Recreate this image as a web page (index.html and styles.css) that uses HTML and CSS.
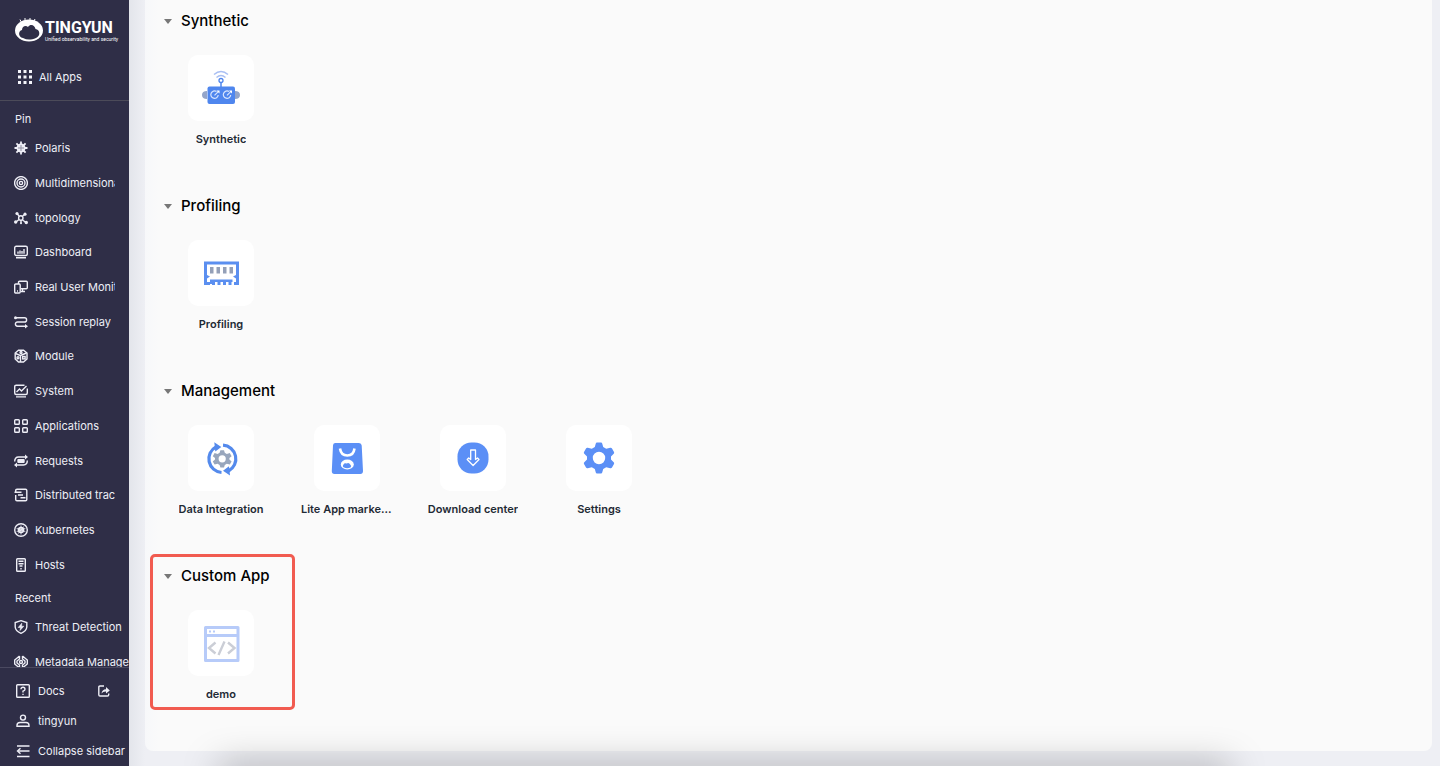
FILE: index.html
```html
<!DOCTYPE html>
<html lang="en">
<head>
  <meta charset="UTF-8" />
  <meta name="viewport" content="width=device-width, initial-scale=1.0"/>
  <title>Tingyun - All Apps</title>
  <link rel="stylesheet" href="styles.css">
</head>
<body>
  <aside class="sidebar">
    <div class="sidebar-top">
      <a class="logo" href="#">
        <svg width="28" height="24" viewBox="0 0 28 24">
          <ellipse cx="14" cy="12.500" rx="14" ry="11" fill="#fff"/>
          <path d="M5 1.500l1 2M10 0l0 2M15 0v2M20 1l-1 2" stroke="#fff" stroke-width="1"/>
          <path d="M8 20C3 19 3 13 7 12C7 8 11 7 13 9C16 5 20 8 20.500 11C25 11.500 26 18 21 20C16 22 12 22 8 20Z" fill="#2f2e47"/>
        </svg>
        <span class="logo-text">
          <strong>TINGYUN</strong>
          <small>Unified observability and security</small>
        </span>
      </a>
      <a class="all-apps" href="#">
        <svg width="14" height="14" viewBox="0 0 14 14" fill="#f4f4fa">
          <path d="M0 0h3v3H0zM5.500 0h3v3h-3zM11 0h3v3h-3zM0 5.500h3v3H0zM5.500 5.500h3v3h-3zM11 5.500h3v3h-3zM0 11h3v3H0zM5.500 11h3v3h-3zM11 11h3v3h-3z"/>
        </svg>
        All Apps
      </a>
    </div>

    <nav class="menu">
      <h3 class="menu-title">Pin</h3>
      <ul class="menu-list pinned">
        <li><a href="#">
          <svg class="icon" viewBox="0 0 14 14"><circle cx="7" cy="7" r="4.500" fill="currentColor" stroke="none"/><path d="M7 0.500v13M0.500 7h13M2.400 2.400l9.200 9.200M11.600 2.400l-9.200 9.200" stroke-width="1.800"/><path d="M7 4.500v1M7 8.500v1M4.500 7h1M8.500 7h1" stroke="#2f2e47" stroke-width="1"/><circle cx="7" cy="7" r="0.700" fill="#2f2e47" stroke="none"/></svg>
          <span>Polaris</span></a></li>
        <li><a href="#">
          <svg class="icon" viewBox="0 0 14 14"><circle cx="7" cy="7" r="6.400"/><circle cx="7" cy="7" r="4"/><circle cx="7" cy="7" r="1.600"/></svg>
          <span>Multidimensional analysis</span></a></li>
        <li><a href="#">
          <svg class="icon" viewBox="0 0 14 14"><path d="M5 5L3 2.500M8.500 5L11 3.500M5 8.500L2 11M8.500 9L12 11.500M7 9v3"/><circle cx="6.800" cy="7" r="2.200"/><g fill="currentColor" stroke="none"><circle cx="3" cy="2.500" r="1.600"/><circle cx="11" cy="3.200" r="1.600"/><circle cx="1.700" cy="11" r="1.700"/><circle cx="12.300" cy="11.500" r="1.700"/><circle cx="7" cy="12.300" r="1"/></g></svg>
          <span>topology</span></a></li>
        <li><a href="#">
          <svg class="icon" viewBox="0 0 14 14"><rect x="0.700" y="1.200" width="12.600" height="9.300" rx="1.500"/><path d="M4 8.700V6.500M6 8.700V5.500M8 8.700V6M10 8.700V4M2 12.800h10"/></svg>
          <span>Dashboard</span></a></li>
        <li><a href="#">
          <svg class="icon" viewBox="0 0 14 14"><path d="M4.500 4V2.200Q4.500 1.200 5.500 1.200h6.800Q13.300 1.200 13.300 2.200v5.600Q13.300 8.800 12.300 8.800H7M8.500 9v2M7 11.500h4"/><rect x="0.700" y="4" width="5.500" height="9" rx="1"/><path d="M3 11h1"/></svg>
          <span>Real User Monitoring</span></a></li>
        <li><a href="#">
          <svg class="icon" viewBox="0 0 14 14"><path d="M2 2.800h8.500a2.100 2.100 0 0 1 0 4.200H3.500a2.100 2.100 0 0 0 0 4.200H12"/><path d="M11 9l3 2.200L11 13.400z" fill="currentColor" stroke="none"/><circle cx="1.500" cy="2.800" r="1.500" fill="currentColor" stroke="none"/></svg>
          <span>Session replay</span></a></li>
        <li><a href="#">
          <svg class="icon" viewBox="0 0 14 14"><path d="M4.500 1.200h5L13 4v6l-3.500 3h-5L1.200 10V4z"/><path d="M1.500 4.500L6.500 6.500V13M6.500 6.500L12.500 4"/><circle cx="7" cy="3.500" r="1"/><circle cx="4" cy="8.800" r="1"/><rect x="8.700" y="7.500" width="2.400" height="2.400"/></svg>
          <span>Module</span></a></li>
        <li><a href="#">
          <svg class="icon" viewBox="0 0 14 14"><path d="M10.500 1.200H2.200Q0.700 1.200 0.700 2.700V9Q0.700 10.500 2.200 10.500h9.600Q13.300 10.500 13.300 9V4.500M2 12.900h10"/><path d="M2.500 8L5.500 5l2 2L12.500 2"/></svg>
          <span>System</span></a></li>
        <li><a href="#">
          <svg class="icon" viewBox="0 0 14 14"><rect x="0.700" y="0.700" width="4.600" height="4.600" rx="0.800"/><rect x="8.700" y="0.700" width="4.600" height="4.600" rx="0.800"/><rect x="0.700" y="8.700" width="4.600" height="4.600" rx="0.800"/><rect x="8.700" y="8.700" width="4.600" height="4.600" rx="0.800"/></svg>
          <span>Applications</span></a></li>
        <li><a href="#">
          <svg class="icon" viewBox="0 0 14 14"><path d="M0.700 7.500Q0.700 3 4.500 3H12M13.300 6.500Q13.300 11 9.500 11H2"/><path d="M11 0.500L14 3l-3 2.500zM3 8.500L0 11l3 2.500z" fill="currentColor" stroke="none"/><rect x="3.300" y="5" width="7.400" height="4" rx="1" fill="currentColor" stroke="none"/></svg>
          <span>Requests</span></a></li>
        <li><a href="#">
          <svg class="icon" viewBox="0 0 14 14"><path d="M1.700 4V2.500Q1.700 1.200 3 1.200h8.500Q12.800 1.200 12.800 2.500v9Q12.800 12.800 11.500 12.800H3Q1.700 12.800 1.700 11.500V7"/><path d="M0.500 4.200h7M4 7h5M6.500 9.800h5" stroke-width="1.500"/></svg>
          <span>Distributed tracing</span></a></li>
        <li><a href="#">
          <svg class="icon" viewBox="0 0 14 14"><circle cx="7" cy="7" r="6.300"/><circle cx="7" cy="7" r="2.400" stroke-width="1.600"/><path d="M7 2.500v9M2.700 5.500l8.600 3M11.300 5.500l-8.600 3M4.300 10.500l5.400-7" stroke-width="0.900"/></svg>
          <span>Kubernetes</span></a></li>
        <li><a href="#">
          <svg class="icon" viewBox="0 0 14 14"><rect x="2.700" y="0.700" width="8.600" height="12.600" rx="0.800"/><path d="M4.500 3.200h5M4.500 5.700h5M5.500 8h3" stroke-width="1.500"/><path d="M6.300 10.800h1.400"/></svg>
          <span>Hosts</span></a></li>
      </ul>
      <h3 class="menu-title recent-title">Recent</h3>
      <ul class="menu-list recent">
        <li><a href="#">
          <svg class="icon" viewBox="0 0 14 14"><path d="M7 0.700l5.800 1.800v4.500Q12.500 11 7 13.300Q1.500 11 1.200 7V2.500z"/><path d="M7.800 3.200L4.200 7.500h2.300L6 10.500l3.800-4.300H7.500z" fill="currentColor" stroke-width="0.600"/></svg>
          <span>Threat Detection</span></a></li>
        <li><a href="#">
          <svg class="icon" viewBox="0 0 14 14"><path d="M5.500 1L0.700 5v4l4.800 4M8.500 1l4.800 4v4l-4.800 4M5.500 1v3L3 6v2l2.500 2v3M8.500 1v3L11 6v2l-2.500 2v3"/><circle cx="7" cy="7" r="1.500"/></svg>
          <span>Metadata Management</span></a></li>
      </ul>
    </nav>

    <div class="sidebar-bottom">
      <a href="#">
        <svg class="icon" viewBox="0 0 14 14"><rect x="0.700" y="0.700" width="12.600" height="12.600" rx="0.800"/><path d="M5 5.200Q5 3.300 7 3.300T9 5.200Q9 6.300 7 7.200V8.500M7 9.700v1.300"/></svg>
        <span>Docs</span>
        <svg class="share" viewBox="0 0 12 12"><path d="M6 1H2Q0.800 1 0.800 2.200v7.600Q0.800 11 2 11h7.500Q10.700 11 10.700 9.800V8.500"/><path d="M3.500 8.500Q4 4.500 8 4.300V2l3.800 3.500L8 8.500V6.500Q5 6.300 3.500 8.500z" fill="currentColor" stroke="none"/></svg>
      </a>
      <a href="#">
        <svg class="icon" viewBox="0 0 14 14"><circle cx="7" cy="3.600" r="2.500"/><path d="M1 12.300v-1Q1 8.500 4 8.500h6q3 0 3 2.800v1z"/></svg>
        <span>tingyun</span>
      </a>
      <button type="button">
        <svg class="icon" viewBox="0 0 14 14"><path d="M1 2h12.500M2 7h11.500M1 12.500h12.500"/><path d="M4.500 4.200L1.500 7l3 2.800"/></svg>
        <span>Collapse sidebar</span>
      </button>
    </div>
  </aside>

  <main class="content">
    <div class="panel">
      <section class="group">
        <h2><button type="button" aria-expanded="true">Synthetic</button></h2>
        <div class="apps">
          <a class="app" href="#">
            <span class="tile">
              <svg viewBox="0 0 40 40">
                <path d="M13 6.500Q20 0.500 27 6.500M15.500 9.500Q20 5.500 24.500 9.500" fill="none" stroke="#a9bff3" stroke-width="1.500"/>
                <path d="M20 14v5" stroke="#4f86ee" stroke-width="1.500"/>
                <circle cx="20" cy="12.500" r="2" fill="#fff" stroke="#4f86ee" stroke-width="1.300"/>
                <path d="M6 23q-5 0-5 4t5 4zM34 23q5 0 5 4t-5 4z" fill="#94a5c9"/>
                <rect x="6.500" y="18.500" width="27.500" height="17.500" rx="2" fill="#4f86ee"/>
                <g fill="none" stroke="#d8e5fd" stroke-width="1.200">
                  <path d="M15.500 23.500a3.700 3.700 0 1 0 1.700 3.500M13.500 27.300l4-4M28 23.500a3.700 3.700 0 1 0 1.700 3.500M26 27.300l4-4"/>
                </g>
                <path d="M15.500 22.500h3v3zM28 22.500h3v3z" fill="#fff"/>
              </svg>
            </span>
            <span class="label">Synthetic</span>
          </a>
        </div>
      </section>

      <section class="group">
        <h2><button type="button" aria-expanded="true">Profiling</button></h2>
        <div class="apps">
          <a class="app" href="#">
            <span class="tile">
              <svg viewBox="0 0 40 40">
                <path fill="#5b8ff0" fill-rule="evenodd" d="M3 8.500h35V32h-5v-3h-2.500v3h-3v-3H25v3h-3v-3h-2.500v3h-3v-3H14v3h-3v-1H9v1H3zM6 11.500v10.500l3 1.500-3 2V29h3v-2.500h22.500V29H35v-3.500l-3-2 3-1.500V11.500z"/>
                <path d="M9 14h3.500v6.500H9zM15.500 14H19v6.500h-3.500zM22 14h3.500v6.500H22zM28.500 14H32v6.500h-3.500z" fill="#94a0b8"/>
              </svg>
            </span>
            <span class="label">Profiling</span>
          </a>
        </div>
      </section>

      <section class="group">
        <h2><button type="button" aria-expanded="true">Management</button></h2>
        <div class="apps">
          <a class="app" href="#">
            <span class="tile">
              <svg viewBox="0 0 40 40">
                <path d="M20.500 34.500A13.700 13.700 0 0 1 15 8.800M22 7.200A13.700 13.700 0 0 1 27.500 33" fill="none" stroke="#548aec" stroke-width="3.200"/>
                <path d="M13.300 4.200l7 4.800-6 4.500zM29 37.500l-7-4.800 6-4.500z" fill="#548aec"/>
                <path transform="translate(0.700 -0.800)" fill="#98a6bc" fill-rule="evenodd" d="M18.700 13h3.600l.8 2.500 2 1.200 3-.9 1.800 3.200-2.200 1.800v1.600l2.200 1.800-1.800 3.200-3-.9-2 1.200-.8 2.500h-3.600l-.8-2.500-2-1.200-3 .9-1.800-3.200 2.200-1.800v-1.600l-2.200-1.800 1.800-3.200 3 .9 2-1.200zM20.500 18a3.600 3.600 0 1 0 0 7.200a3.600 3.600 0 0 0 0-7.200z"/>
              </svg>
            </span>
            <span class="label">Data Integration</span>
          </a>
          <a class="app" href="#">
            <span class="tile">
              <svg viewBox="0 0 40 40">
                <path d="M8 5h24q2.500 0 2.700 2.500L36 33q0 3-2.700 3H7.500Q4.700 36 4.800 33L6 7.500Q6 5 8 5z" fill="#5b8ff6"/>
                <path d="M13 10.500Q14 17.500 20.300 17.500T27.500 10.500" fill="none" stroke="#fff" stroke-width="2.600"/>
                <ellipse cx="20.300" cy="26.500" rx="6.500" ry="5" fill="#fff"/>
                <path d="M17 29.500Q15 28.500 16.500 26.500Q17.500 24.500 19.500 25.500Q22 24 23.200 26.500Q25 28 23.500 29.500Q20 31 17 29.500z" fill="#5b8ff6"/>
              </svg>
            </span>
            <span class="label">Lite App market place</span>
          </a>
          <a class="app" href="#">
            <span class="tile">
              <svg viewBox="0 0 40 40">
                <rect x="4.500" y="4.500" width="31" height="31" rx="14" fill="#5b8ff6"/>
                <path d="M17.700 12h4.800v9.500l2-1.500 1.500 1.500-5.900 6-5.900-6 1.500-1.500 2 1.500z" fill="none" stroke="#fff" stroke-width="1.300" stroke-linejoin="round"/>
              </svg>
            </span>
            <span class="label">Download center</span>
          </a>
          <a class="app" href="#">
            <span class="tile">
              <svg viewBox="0 0 40 40">
                <path fill="#5b8ff6" fill-rule="evenodd" d="M18 4.500h4q1 0 1.200 1l1 3.500 3 1.800 4-1q1.200-.3 1.800.7l2 3.400q.5 1-.3 1.800L32 18.500v3l2.700 2.800q.8.800.3 1.800l-2 3.400q-.6 1-1.800.7l-4-1-3 1.800-1 3.500q-.2 1-1.200 1h-4q-1 0-1.200-1l-1-3.500-3-1.800-4 1q-1.200.3-1.800-.7l-2-3.400q-.5-1 .3-1.800L8 21.500v-3l-2.700-2.800q-.8-.8-.3-1.800l2-3.400q.6-1 1.800-.7l4 1 3-1.800 1-3.500q.2-1 1.200-1zM20 13.800a6.200 6.200 0 1 0 0 12.400a6.200 6.200 0 0 0 0-12.400z"/>
              </svg>
            </span>
            <span class="label">Settings</span>
          </a>
        </div>
      </section>

      <section class="group highlight">
        <h2><button type="button" aria-expanded="true">Custom App</button></h2>
        <div class="apps">
          <a class="app" href="#">
            <span class="tile">
              <svg viewBox="0 0 40 40">
                <path fill="#b7cbf9" fill-rule="evenodd" d="M4 3h33q1.500 0 1.500 1.500v33Q38.500 39 37 39H4.500Q3 39 3 37.500V4.500Q3 3 4.500 3zM6 6v5h29.500V6zM6 14v22h29.500V14z"/>
                <path d="M8 7.500h2v2H8zM12 7.500h2v2h-2z" fill="#b7cbf9"/>
                <path d="M14.500 19.500L8 25l6.500 5.500M27 19.500l6.500 5.500-6.500 5.500M23.500 18.500l-6 13.500" fill="none" stroke="#cbced6" stroke-width="2.400"/>
              </svg>
            </span>
            <span class="label">demo</span>
          </a>
        </div>
      </section>
    </div>
  </main>
</body>
</html>
```
FILE: styles.css
```css
:root {
  --sidebar-bg: #2f2e47;
  --sidebar-text: #eeeef6;
  --page-bg: #eeeff4;
  --panel-bg: #fafafa;
  --highlight: #f15b50;
}

*, *::before, *::after {
  box-sizing: border-box;
}

body {
  margin: 0;
  display: flex;
  height: 100vh;
  overflow: hidden;
  font-family: Inter, "Liberation Sans", Arial, sans-serif;
  font-size: 11px;
  background-color: var(--page-bg);
}

h2, h3, ul {
  margin: 0;
  padding: 0;
}

a {
  color: inherit;
  text-decoration: none;
}

button {
  border: none;
  background: none;
  padding: 0;
  font: inherit;
  color: inherit;
  cursor: pointer;
}

/* sidebar */
.sidebar {
  display: flex;
  flex-direction: column;
  flex: none;
  width: 129px;
  overflow: hidden;
  white-space: nowrap;
  background-color: var(--sidebar-bg);
  color: var(--sidebar-text);
}

.sidebar-top {
  flex: none;
  padding-top: 17px;
  border-bottom: 1px solid #4c4b59;
}

.logo {
  display: flex;
  align-items: center;
  gap: 2px;
  height: 26px;
  padding-left: 15px;
  color: #fff;
}

.logo-text {
  display: flex;
  flex-direction: column;
  font-family: Roboto, "Liberation Sans", sans-serif;
}

.logo-text strong {
  font-size: 16px;
  line-height: 17px;
}

.logo-text small {
  font-size: 5px;
  line-height: 6px;
}

.all-apps {
  display: flex;
  align-items: center;
  gap: 7px;
  height: 57px;
  padding: 10px 0 0 18px;
}

.menu {
  display: flex;
  flex-direction: column;
  flex: 1;
  min-height: 0;
  overflow: hidden;
}

.menu-title {
  flex: none;
  height: 30px;
  padding: 6px 0 0 15px;
  font-size: 11px;
  font-weight: normal;
  line-height: 24px;
}

.recent-title {
  height: 27px;
  padding-top: 4px;
}

.menu-list {
  display: flex;
  flex-direction: column;
  list-style: none;
}

.menu-list li {
  flex: 1 0 28px;
  display: flex;
}

.menu-list a {
  display: flex;
  align-items: center;
  gap: 7px;
  width: 100%;
  padding-left: 14px;
}

.menu-list span {
  overflow: hidden;
}

.pinned {
  flex: 1;
}

.pinned a {
  padding-right: 14px;
}

/* last recent entry runs under the footer */
.recent {
  flex: none;
  height: 70px;
  margin-bottom: -12px;
}

.icon, .share {
  flex: none;
  width: 14px;
  height: 14px;
  fill: none;
  stroke: currentColor;
  stroke-width: 1.4;
}

.sidebar-bottom {
  flex: none;
  padding-top: 8px;
  border-top: 1px solid #4a4960;
}

.sidebar-bottom a, .sidebar-bottom button {
  display: flex;
  align-items: center;
  gap: 8px;
  width: 100%;
  height: 30px;
  padding-left: 16px;
}

.share {
  width: 12px;
  height: 12px;
  margin-left: auto;
  margin-right: 19px;
}

/* content */
.content {
  position: relative;
  flex: 1;
  min-width: 0;
  padding: 0 8px 15px 16px;
  background: linear-gradient(to right, #e3e5eb, var(--page-bg) 16px);
  overflow: hidden;
}

.content::after {
  content: "";
  position: absolute;
  left: 90px;
  right: 210px;
  bottom: -20px;
  height: 20px;
  box-shadow: 0 0 36px rgba(0, 0, 0, 0.34);
}

.panel {
  height: 100%;
  padding: 9px 13px 0;
  border-radius: 0 0 8px 8px;
  background: linear-gradient(to right, #f7f8fa, var(--panel-bg) 14px);
}

.group {
  margin-bottom: 46px;
}

.group h2 {
  margin-bottom: 22px;
  font-size: 15px;
  font-weight: 500;
  line-height: 24px;
  color: #000;
}

.group h2 button {
  display: flex;
  align-items: center;
  gap: 9px;
  padding-left: 6px;
}

.group h2 button::before {
  content: "";
  border: 4px solid transparent;
  border-top: 5px solid #777;
  border-bottom: none;
}

.apps {
  display: flex;
  flex-wrap: wrap;
}

.app {
  display: flex;
  flex-direction: column;
  align-items: center;
  gap: 9px;
  width: 126px;
  padding: 0 17px;
}

.tile {
  display: flex;
  align-items: center;
  justify-content: center;
  width: 66px;
  height: 66px;
  border-radius: 10px;
  background-color: #fff;
}

.tile svg {
  width: 40px;
  height: 40px;
}

.label {
  max-width: 100%;
  overflow: hidden;
  text-overflow: ellipsis;
  white-space: nowrap;
  font-weight: 600;
  line-height: 18px;
  color: #1f2a35;
}

.highlight {
  position: relative;
}

.highlight::after {
  content: "";
  position: absolute;
  top: -10px;
  bottom: -7px;
  left: -8px;
  width: 145px;
  border: 3px solid var(--highlight);
  border-radius: 5px;
  pointer-events: none;
}
```
